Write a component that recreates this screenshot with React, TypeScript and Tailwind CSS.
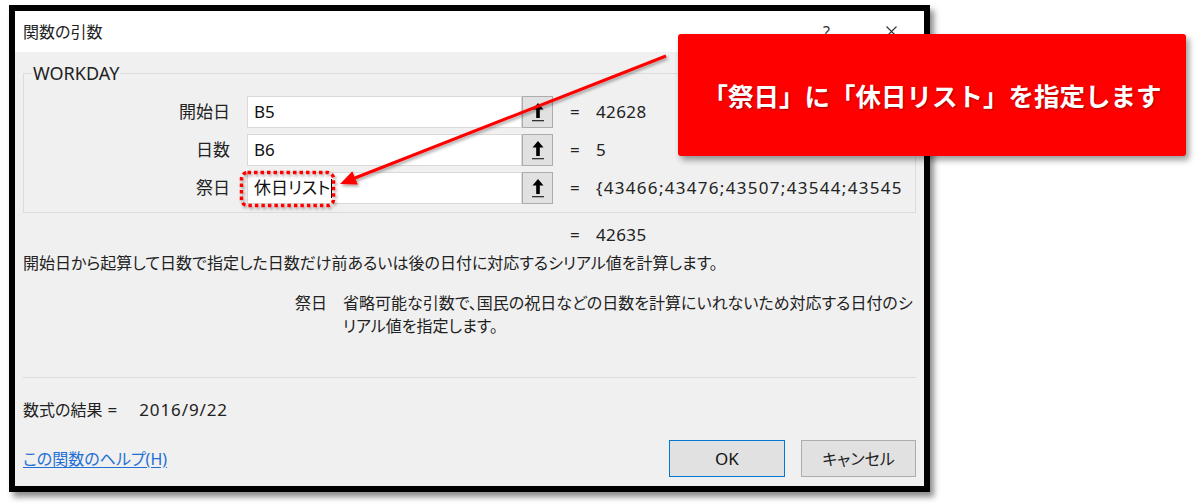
import React from "react";

const font = "font-['Noto_Sans','Noto_Sans_CJK_JP',sans-serif] [font-feature-settings:'palt']";

function UpIcon() {
  return (
    <svg width="16" height="22" viewBox="0 0 16 22">
      <path d="M8 2 L2.5 8.5 L6.2 8.5 L6.2 17 L9.8 17 L9.8 8.5 L13.5 8.5 Z" fill="#000" />
      <rect x="2" y="19" width="12" height="1.3" fill="#333" />
    </svg>
  );
}

function Row({ label, value, result, wide, children }: { label: string; value?: string; result: string; wide?: boolean; children?: React.ReactNode }) {
  return (
    <div className="flex items-center h-[32px]">
      <div className="w-[206px] text-right text-[17px] text-[#222] leading-[24px]">{label}</div>
      <div className="ml-[17px] w-[275px] h-[32px] border border-[#d9d9d9] bg-white pl-[6px] flex items-center text-[17px] text-[#111] relative">
        {value}
        {children}
      </div>
      <div className="w-[31px] h-[32px] border border-[#adadad] bg-[#e1e1e1] flex items-center justify-center">
        <UpIcon />
      </div>
      <div className="ml-[17px] w-[26px] text-[17px] text-[#222]">=</div>
      <div className={`text-[17px] text-[#222] whitespace-nowrap ${wide ? "tracking-[1.3px]" : "tracking-[0.4px]"}`}>{result}</div>
    </div>
  );
}

export default function App() {
  return (
    <div className={`relative w-[1200px] h-[503px] bg-white overflow-hidden pt-[5px] pl-[9px] ${font}`}>
      <div className="w-[921px] h-[487px] border-[6px] border-black bg-[#f0f0f0] flex flex-col shadow-[4px_5px_6px_rgba(0,0,0,0.45)]">
        {/* title bar */}
        <div className="h-[41px] bg-white flex items-center pl-[8px] pr-[27px]">
          <span className="text-[16px] text-[#222]">関数の引数</span>
          <div className="ml-auto flex items-center gap-[56px]">
            <span className="text-[16px] text-[#333]">?</span>
            <svg width="11" height="11" viewBox="0 0 11 11">
              <path d="M0.5 0.5 L10.5 10.5 M10.5 0.5 L0.5 10.5" stroke="#333" strokeWidth="1.1" />
            </svg>
          </div>
        </div>

        {/* body */}
        <div className="flex-1 flex flex-col px-[8px]">
          <fieldset className="mt-[11px] border border-[#dcdcdc] pb-[8px]">
            <legend className="ml-[8px] px-[1px] text-[18px] leading-[20px] text-[#222]">WORKDAY</legend>
            <div className="pt-[13px] flex flex-col gap-[6px]">
              <Row label="開始日" value="B5" result="42628" />
              <Row label="日数" value="B6" result="5" />
              <Row label="祭日" result="{43466;43476;43507;43544;43545" wide>
                <span>休日リスト</span>
                <span className="ml-[1px] w-px h-[19px] bg-black" />
              </Row>
            </div>
          </fieldset>

          <div className="mt-[10px] ml-[547px] flex text-[17px] leading-[24px] text-[#222]">
            <span className="w-[26px]">=</span>
            <span className="tracking-[0.4px]">42635</span>
          </div>

          <div className="mt-[4px] text-[16px] leading-[24px] text-[#222] whitespace-nowrap">
            開始日から起算して日数で指定した日数だけ前あるいは後の日付に対応するシリアル値を計算します。
          </div>

          <div className="mt-[17px] ml-[272px] flex text-[16px] leading-[23px] text-[#222]">
            <span className="w-[48px] shrink-0">祭日</span>
            <span className="whitespace-nowrap">
              省略可能な引数で、国民の祝日などの日数を計算にいれないため対応する日付のシ
              <br />
              リアル値を指定します。
            </span>
          </div>

          <div className="mt-[39px] h-px bg-[#dcdcdc]" />

          <div className="mt-[20px] flex items-baseline text-[16px] leading-[24px] text-[#222]">
            <span>数式の結果</span>
            <span className="ml-[5px] text-[17px]">=</span>
            <span className="ml-[22px] text-[17px] tracking-[0.9px]">2016/9/22</span>
          </div>

          <div className="mt-[18px] flex items-center h-[37px]">
            <span className="text-[16px] text-[#1f6fd6] underline underline-offset-2">この関数のヘルプ(H)</span>
            <div className="ml-auto w-[116px] h-[37px] border border-[#0078d7] bg-[#e1e1e1] flex items-center justify-center text-[17px] text-[#111]">
              OK
            </div>
            <div className="ml-[16px] w-[115px] h-[37px] border border-[#adadad] bg-[#e1e1e1] flex items-center justify-center text-[16px] text-[#222]">
              キャンセル
            </div>
          </div>
        </div>
      </div>

      {/* annotations */}
      <svg className="absolute left-0 top-0 pointer-events-none" width="1200" height="503" viewBox="0 0 1200 503">
        <defs>
          <filter id="sh" x="-10%" y="-10%" width="130%" height="130%">
            <feDropShadow dx="1.5" dy="2" stdDeviation="1.5" floodColor="#000" floodOpacity="0.35" />
          </filter>
        </defs>
        <g filter="url(#sh)">
          <line x1="666" y1="56" x2="355" y2="178" stroke="#ff0000" strokeWidth="3" />
          <polygon points="340,184 357.8,184.6 352.3,171.2" fill="#ff0000" />
          <rect x="241.5" y="172.5" width="92" height="33" rx="6" fill="none" stroke="#ff0000" strokeWidth="3.5" strokeDasharray="3.5 3" />
        </g>
      </svg>

      <div className="absolute left-[678px] top-[34px] w-[508px] h-[122px] bg-[#ff0000] rounded-[3px] shadow-[3px_4px_6px_rgba(0,0,0,0.4)] flex items-center justify-center">
        <span className="text-white font-bold text-[25.5px] [font-feature-settings:normal] [text-shadow:1px_1px_2px_rgba(0,0,0,0.35)] whitespace-nowrap font-['Noto_Sans_CJK_JP',sans-serif]">
          「祭日」に「休日リスト」を指定します
        </span>
      </div>
    </div>
  );
}
